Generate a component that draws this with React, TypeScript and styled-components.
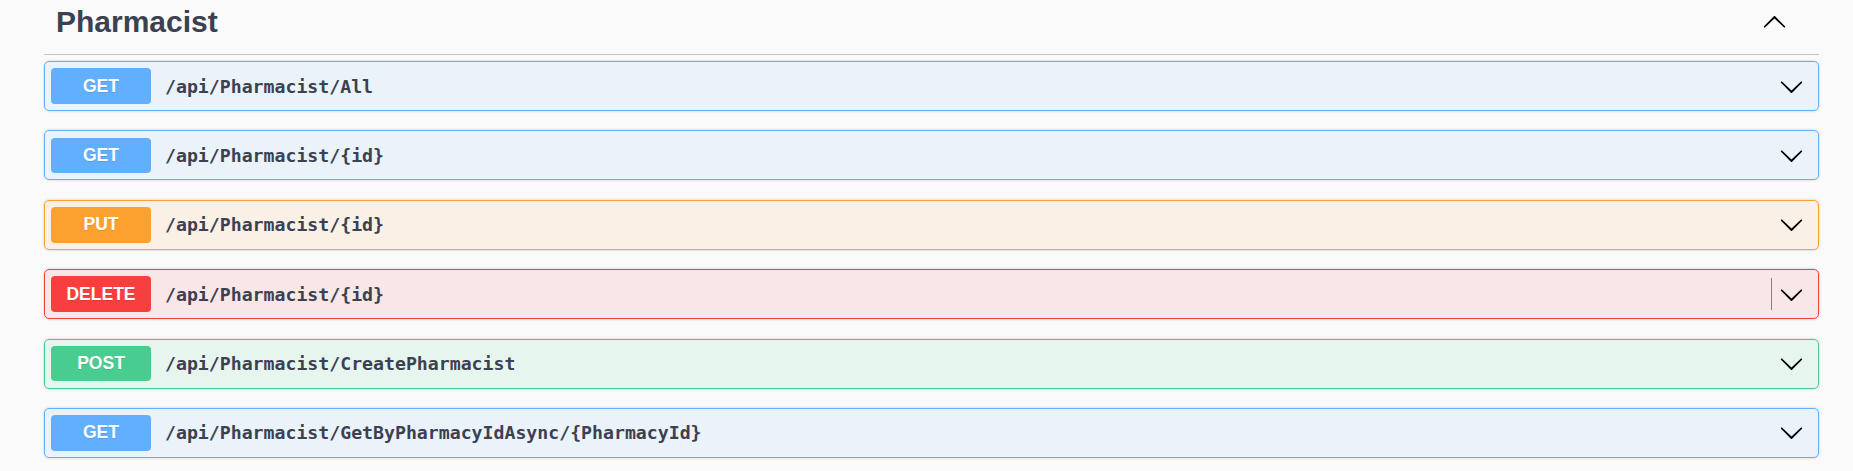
import React from 'react';
import styled, { createGlobalStyle } from 'styled-components';

type Method = 'GET' | 'PUT' | 'DELETE' | 'POST';

const methodColors: Record<Method, { main: string; soft: string }> = {
  GET: { main: '#61affe', soft: 'rgba(97, 175, 254, 0.1)' },
  PUT: { main: '#fca130', soft: 'rgba(252, 161, 48, 0.1)' },
  DELETE: { main: '#f93e3e', soft: 'rgba(249, 62, 62, 0.1)' },
  POST: { main: '#49cc90', soft: 'rgba(73, 204, 144, 0.1)' },
};

const operations: { method: Method; path: string; divider?: boolean }[] = [
  { method: 'GET', path: '/api/Pharmacist/All' },
  { method: 'GET', path: '/api/Pharmacist/{id}' },
  { method: 'PUT', path: '/api/Pharmacist/{id}' },
  { method: 'DELETE', path: '/api/Pharmacist/{id}', divider: true },
  { method: 'POST', path: '/api/Pharmacist/CreatePharmacist' },
  { method: 'GET', path: '/api/Pharmacist/GetByPharmacyIdAsync/{PharmacyId}' },
];

const GlobalStyle = createGlobalStyle`
  html, body {
    margin: 0;
    padding: 0;
    background: #fafafa;
  }
  body {
    font-family: "Liberation Sans", Arial, sans-serif;
  }
`;

const Wrapper = styled.section`
  padding: 0 34px 0 44px;
`;

const TagHeader = styled.div`
  display: flex;
  align-items: center;
  height: 55px;
  box-sizing: border-box;
  padding: 0 32px 10px 12px;
  border-bottom: 1px solid rgba(59, 65, 81, 0.3);
  margin-bottom: 6px;
`;

const TagTitle = styled.h4`
  flex: 1;
  margin: 0;
  font-family: "Liberation Sans", Arial, sans-serif;
  font-size: 30px;
  line-height: 34.5px;
  font-weight: 700;
  color: #3b4151;
`;

const Block = styled.div<{ $method: Method }>`
  display: flex;
  align-items: center;
  height: 50px;
  box-sizing: border-box;
  padding: 0 6px;
  margin-bottom: 19.4px;
  border: 1px solid ${p => methodColors[p.$method].main};
  border-radius: 5px;
  background: ${p => methodColors[p.$method].soft};
  box-shadow: 0 0 3px rgba(0, 0, 0, 0.19);
`;

const Badge = styled.span<{ $method: Method }>`
  display: flex;
  align-items: center;
  justify-content: center;
  width: 100px;
  height: 35.5px;
  border-radius: 4px;
  background: ${p => methodColors[p.$method].main};
  color: #fff;
  font-family: "Liberation Sans", Arial, sans-serif;
  font-size: 17.5px;
  font-weight: 700;
  text-shadow: 0 1px 0 rgba(0, 0, 0, 0.1);
`;

const Path = styled.span`
  flex: 1;
  margin-left: 14px;
  font-family: "DejaVu Sans Mono", "Liberation Mono", monospace;
  font-size: 18.2px;
  font-weight: 700;
  color: #3b4151;
`;

const Divider = styled.span`
  width: 1px;
  height: 32px;
  margin-right: 7px;
  background: #808290;
`;

const ArrowBox = styled.span<{ $right?: number }>`
  display: flex;
  margin-right: ${p => p.$right ?? 0}px;
`;

const Arrow = ({ up }: { up?: boolean }) => (
  <svg width="25" height="25" viewBox="0 0 20 20">
    <path
      transform={up ? 'rotate(180 10 10)' : undefined}
      fill="#000"
      d="M17.418 6.109c.272-.268.709-.268.979 0s.271.701 0 .969l-7.908 7.83c-.27.268-.707.268-.979 0l-7.908-7.83c-.27-.268-.27-.701 0-.969.271-.268.709-.268.979 0L10 13.25l7.418-7.141z"
    />
  </svg>
);

export default function App() {
  return (
    <>
      <GlobalStyle />
      <Wrapper>
        <TagHeader>
          <TagTitle>Pharmacist</TagTitle>
          <ArrowBox>
            <Arrow up />
          </ArrowBox>
        </TagHeader>
        {operations.map((op, i) => (
          <Block key={i} $method={op.method}>
            <Badge $method={op.method}>{op.method}</Badge>
            <Path>{op.path}</Path>
            {op.divider && <Divider />}
            <ArrowBox $right={8}>
              <Arrow />
            </ArrowBox>
          </Block>
        ))}
      </Wrapper>
    </>
  );
}
